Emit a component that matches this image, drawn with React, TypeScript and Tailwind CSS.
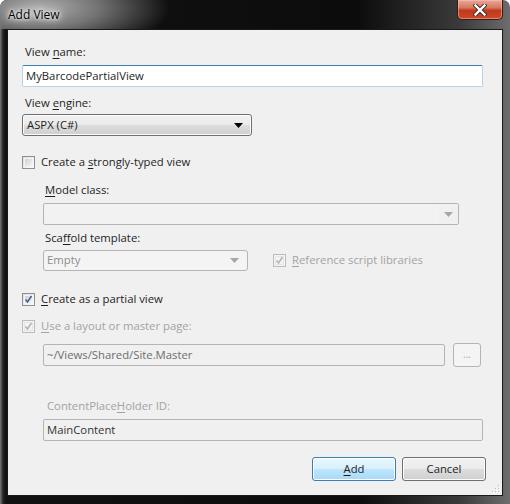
import React from "react";

const font = "font-['Segoe_UI','Open_Sans',sans-serif] text-[11.3px]";

const Check = ({ checked, disabled }: { checked?: boolean; disabled?: boolean }) => (
  <div
    className={`relative w-[13px] h-[13px] shrink-0 border ${
      disabled ? "border-[#bcbcbc] bg-[#f4f4f4]" : "border-[#8e8f8f] bg-[linear-gradient(135deg,#dcdcdc,#fdfdfd)]"
    }`}
  >
    <div
      className={`absolute inset-[1px] border ${
        disabled ? "border-[#e6e6e6]" : "border-[#f4f4f4] bg-[linear-gradient(135deg,#cbcfd5,#f6f6f6)]"
      }`}
    />
    {checked && (
      <svg className="absolute inset-0" width="11" height="11" viewBox="0 0 11 11">
        <path
          d="M2.5 5.5 L4.5 8 L8.5 2"
          fill="none"
          stroke={disabled ? "#b4b4b4" : "#4a5f97"}
          strokeWidth="1.6"
        />
      </svg>
    )}
  </div>
);

const U = ({ children }: { children: React.ReactNode }) => <span className="underline underline-offset-2">{children}</span>;

const Arrow = ({ color }: { color: string }) => (
  <svg width="9" height="5" viewBox="0 0 9 5">
    <path d="M0 0 H9 L4.5 5 Z" fill={color} />
  </svg>
);

export default function App() {
  return (
    <div className={`w-[510px] h-[504px] ${font} bg-[linear-gradient(90deg,#7b7b7b_0,#242424_3px,#111_6px,#0c0c0c_70%,#3a3a3a_90%,#6d6d6d_100%)] rounded-t-[7px] overflow-hidden flex flex-col`}>
      {/* title bar */}
      <div className="relative h-[29px] shrink-0 bg-[radial-gradient(ellipse_130px_45px_at_40px_8px,#b0b0b0,#737373_45%,transparent_100%)]">
        <div className="absolute left-[8px] top-[6px] text-[12px] text-black [text-shadow:0_0_6px_#fff,0_0_10px_#fff,0_0_3px_#fff]">
          Add View
        </div>
        <div className="absolute left-[457px] top-0 w-[46px] h-[20px] rounded-b-[5px] border border-t-0 border-[#3b1a14] bg-[linear-gradient(180deg,#e8a998_0,#d7785f_40%,#c2391c_55%,#c94a2a_100%)] shadow-[inset_0_0_0_1px_rgba(255,200,190,0.5)] flex items-center justify-center">
          <svg width="14" height="12" viewBox="0 0 14 12">
            <path d="M2.5 1.5 L11.5 10.5 M11.5 1.5 L2.5 10.5" stroke="#3b2a2a" strokeWidth="4.2" strokeLinecap="square" />
            <path d="M2.5 1.5 L11.5 10.5 M11.5 1.5 L2.5 10.5" stroke="#fff" strokeWidth="2.4" strokeLinecap="square" />
          </svg>
        </div>
      </div>

      <div className="flex flex-1 pl-[7px] pr-[7px] pb-[8px]">
        <div className="relative w-[496px] h-[467px] border border-[#1a1a1a] bg-[#f0f0f0] text-[#1e1e1e]">
          <div className="pl-[14px] pt-[14px] flex flex-col items-start">
            <div className="ml-[3px] h-4 leading-4">
              View <U>n</U>ame:
            </div>
            <div className="mt-[5px] w-[461px] h-[22px] bg-white border border-[#b6d3ea] border-t-[#3c7fb1] rounded-[2px] flex items-center pl-[3px] leading-4">
              MyBarcodePartialView
            </div>
            <div className="mt-[8px] ml-[3px] h-4 leading-4">
              View <U>e</U>ngine:
            </div>
            <div className="mt-[3px] w-[230px] h-[22px] rounded-[3px] border border-[#707070] bg-[linear-gradient(180deg,#f2f2f2_0,#ebebeb_48%,#dddddd_52%,#cfcfcf_100%)] shadow-[inset_0_0_0_1px_#fcfcfc] flex items-center justify-between pl-[4px] pr-[8px]">
              <span>ASPX (C#)</span>
              <Arrow color="#000" />
            </div>

            <div className="mt-[18px] h-4 flex items-center gap-[6px]">
              <Check />
              <span>
                Create a <U>s</U>trongly-typed view
              </span>
            </div>
            <div className="mt-[12px] ml-[23px] h-4 leading-4">
              <U>M</U>odel class:
            </div>
            <div className="mt-[5px] ml-[21px] w-[416px] h-[22px] rounded-[2px] border border-[#b4b4b4] bg-[#f2f2f2] flex justify-end">
              <div className="w-[19px] h-full flex items-center justify-center bg-[#f0f0f0]">
                <Arrow color="#a6a6a6" />
              </div>
            </div>
            <div className="mt-[5px] ml-[23px] h-4 leading-4">
              Sca<U>ff</U>old template:
            </div>
            <div className="mt-[4px] flex items-center">
              <div className="ml-[21px] w-[205px] h-[21px] rounded-[3px] border border-[#b4b4b4] bg-[#f4f4f4] flex items-center justify-between pl-[3px] pr-[8px] text-[#8d8d8d]">
                <span>Empty</span>
                <Arrow color="#a6a6a6" />
              </div>
              <div className="ml-[25px] flex items-center gap-[6px] text-[#a3a3a3]">
                <Check checked disabled />
                <span>
                  <U>R</U>eference script libraries
                </span>
              </div>
            </div>

            <div className="mt-[20px] h-4 flex items-center gap-[6px]">
              <Check checked />
              <span>
                <U>C</U>reate as a partial view
              </span>
            </div>
            <div className="mt-[11px] h-4 flex items-center gap-[6px] text-[#a3a3a3]">
              <Check checked disabled />
              <span>
                <U>U</U>se a layout or master page:
              </span>
            </div>
            <div className="mt-[9px] flex items-center">
              <div className="ml-[21px] w-[402px] h-[22px] rounded-[2px] border border-[#b4b4b4] bg-[#f0f0f0] flex items-center pl-[3px] text-[#6d6d6d]">
                ~/Views/Shared/Site.Master
              </div>
              <div className="ml-[8px] w-[28px] h-[24px] rounded-[3px] border border-[#b4b4b4] bg-[#f4f4f4] flex items-center justify-center text-[#a8a8a8] text-[10px] pb-[2px]">
                ...
              </div>
            </div>

            <div className="mt-[31px] ml-[25px] h-4 leading-4 text-[#a3a3a3]">
              ContentPlace<U>H</U>older ID:
            </div>
            <div className="mt-[5px] ml-[21px] w-[440px] h-[22px] rounded-[2px] border border-[#b4b4b4] bg-[#f0f0f0] flex items-center pl-[3px] text-[#333]">
              MainContent
            </div>

            <div className="mt-[16px] ml-[290px] flex gap-[6px]">
              <div className="w-[84px] h-[24px] rounded-[3px] border border-[#3c7fb1] bg-[linear-gradient(180deg,#eaf6fd_0,#d9f0fc_48%,#bee6fd_52%,#a7d9f5_100%)] shadow-[inset_0_0_0_1px_#fff] flex items-center justify-center">
                <span>
                  <U>A</U>dd
                </span>
              </div>
              <div className="w-[84px] h-[24px] rounded-[3px] border border-[#707070] bg-[linear-gradient(180deg,#f2f2f2_0,#ebebeb_48%,#dddddd_52%,#cfcfcf_100%)] shadow-[inset_0_0_0_1px_#fcfcfc] flex items-center justify-center">
                Cancel
              </div>
            </div>
          </div>

          {/* resize grip */}
          <svg className="absolute right-[1px] bottom-[1px]" width="9" height="9" viewBox="0 0 9 9">
            {[
              [7, 1],
              [4, 4],
              [7, 4],
              [1, 7],
              [4, 7],
              [7, 7],
            ].map(([x, y], i) => (
              <g key={i}>
                <rect x={x} y={y} width="1" height="1" fill="#fff" />
                <rect x={x - 1} y={y - 1} width="1" height="1" fill="#b8b8b8" />
              </g>
            ))}
          </svg>
        </div>
      </div>
    </div>
  );
}
